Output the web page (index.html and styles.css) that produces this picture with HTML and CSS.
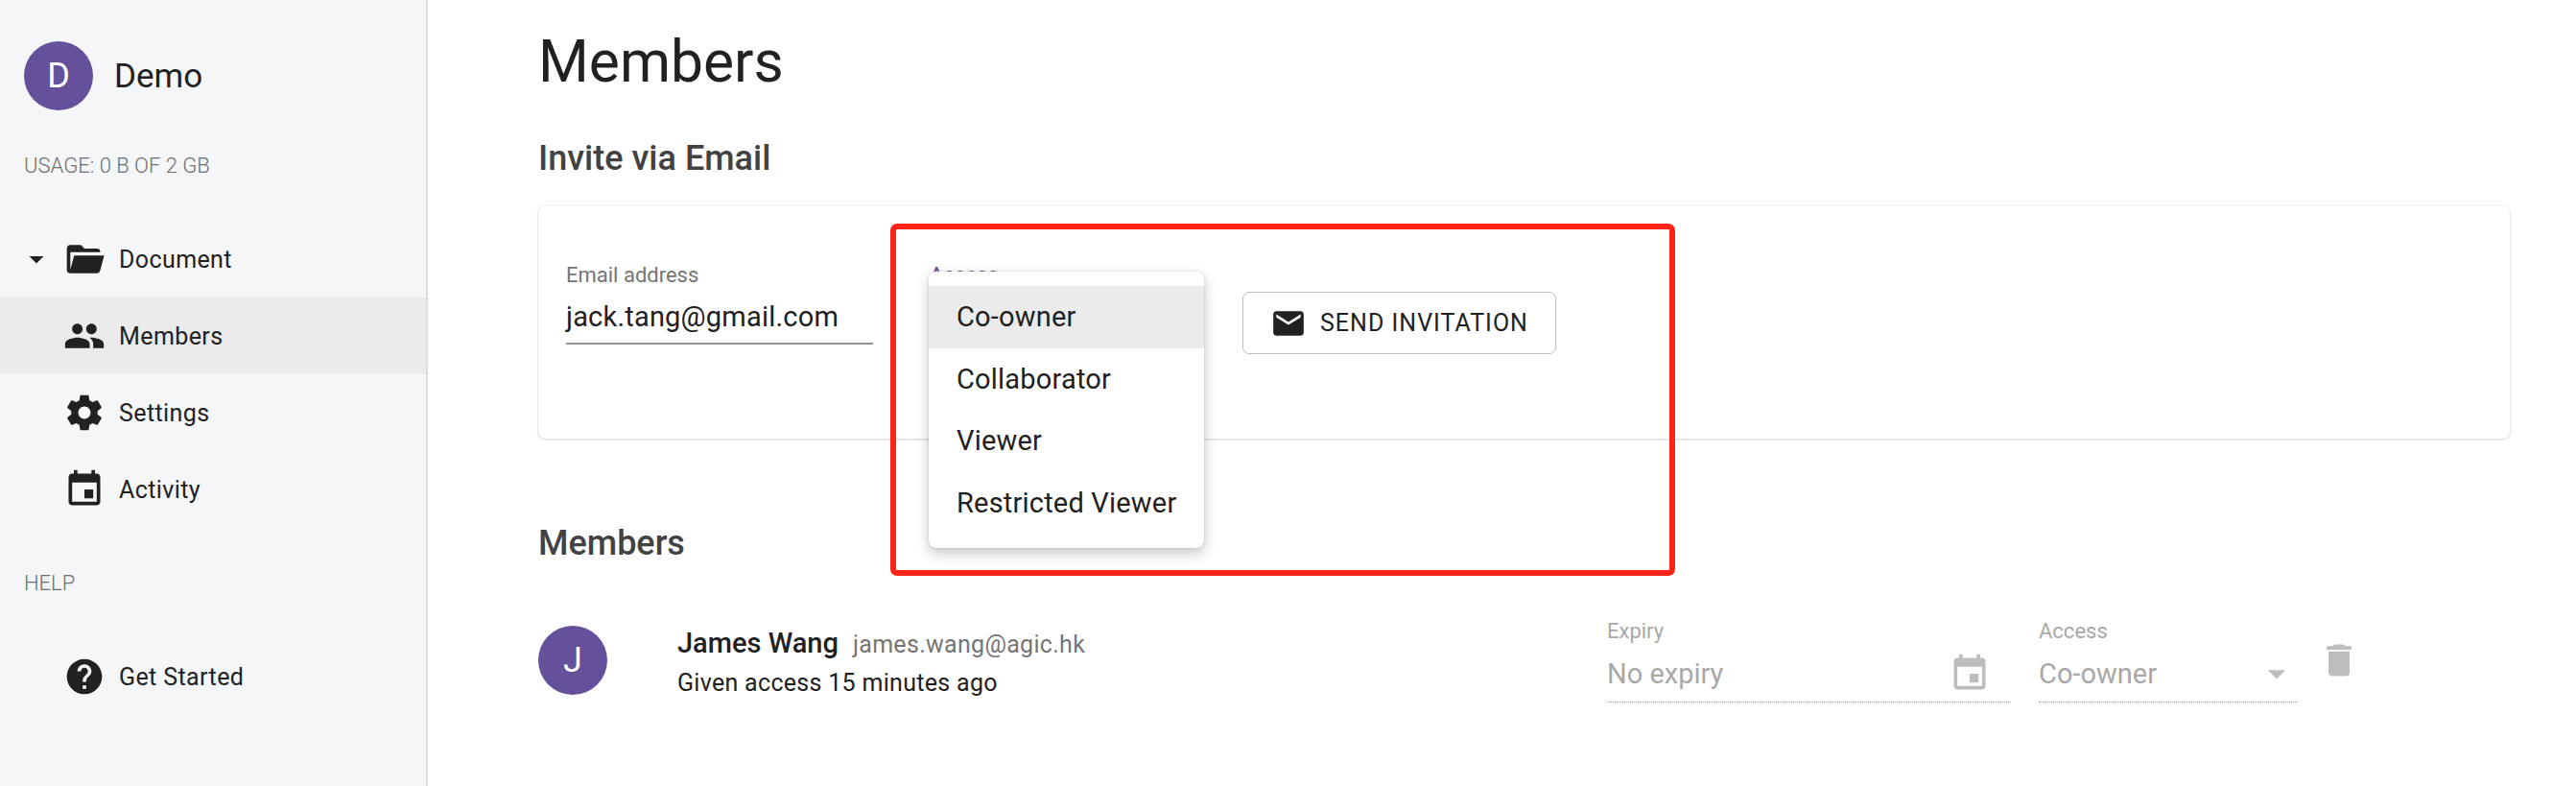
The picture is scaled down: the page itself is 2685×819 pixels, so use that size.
FILE: index.html
```html
<!DOCTYPE html>
<html lang="en">
<head>
  <meta charset="UTF-8" />
  <title>Members</title>
  <link rel="stylesheet" href="styles.css">
</head>
<body>
  <aside class="sidebar">
    <div class="profile">
      <div class="avatar">D</div>
      <span class="profile-name">Demo</span>
    </div>
    <p class="side-note usage">USAGE: 0 B OF 2 GB</p>

    <nav class="nav">
      <a class="nav-item nav-item-parent">
        <svg class="caret" viewBox="0 0 24 24"><path d="M7 10l5 5 5-5z"/></svg>
        <svg class="icon folder" viewBox="0 0 24 24"><path d="M19 20H4a2 2 0 0 1-2-2V6c0-1.11.89-2 2-2h6l2 2h7a2 2 0 0 1 2 2H4v10l2.14-8h17.07l-2.28 8.5c-.23.87-1.01 1.5-1.93 1.5z"/></svg>
        Document
      </a>
      <a class="nav-item active">
        <svg class="icon" viewBox="0 0 24 24"><path d="M16 11c1.66 0 2.99-1.34 2.99-3S17.66 5 16 5c-1.66 0-3 1.34-3 3s1.34 3 3 3zm-8 0c1.66 0 2.99-1.34 2.99-3S9.66 5 8 5C6.34 5 5 6.34 5 8s1.34 3 3 3zm0 2c-2.33 0-7 1.17-7 3.5V19h14v-2.5c0-2.33-4.67-3.5-7-3.5zm8 0c-.29 0-.62.02-.97.05 1.16.84 1.97 1.97 1.97 3.45V19h6v-2.5c0-2.33-4.67-3.5-7-3.5z"/></svg>
        Members
      </a>
      <a class="nav-item">
        <svg class="icon" viewBox="0 0 24 24"><path d="M19.43 12.98c.04-.32.07-.64.07-.98s-.03-.66-.07-.98l2.11-1.65c.19-.15.24-.42.12-.64l-2-3.46c-.12-.22-.39-.3-.61-.22l-2.49 1c-.52-.4-1.08-.73-1.69-.98l-.38-2.65C14.46 2.18 14.25 2 14 2h-4c-.25 0-.46.18-.49.42l-.38 2.65c-.61.25-1.17.59-1.69.98l-2.49-1c-.23-.09-.49 0-.61.22l-2 3.46c-.13.22-.07.49.12.64l2.11 1.65c-.04.32-.07.65-.07.98s.03.66.07.98l-2.11 1.65c-.19.15-.24.42-.12.64l2 3.46c.12.22.39.3.61.22l2.49-1c.52.4 1.08.73 1.69.98l.38 2.65c.03.24.24.42.49.42h4c.25 0 .46-.18.49-.42l.38-2.65c.61-.25 1.17-.59 1.69-.98l2.49 1c.23.09.49 0 .61-.22l2-3.46c.12-.22.07-.49-.12-.64l-2.11-1.65zM12 15.5c-1.93 0-3.5-1.57-3.5-3.5s1.57-3.5 3.5-3.5 3.5 1.57 3.5 3.5-1.57 3.5-3.5 3.5z"/></svg>
        Settings
      </a>
      <a class="nav-item">
        <svg class="icon" viewBox="0 0 24 24"><path d="M17 12h-5v5h5v-5zM16 1v2H8V1H6v2H5c-1.11 0-1.99.9-1.99 2L3 19c0 1.1.89 2 2 2h14c1.1 0 2-.9 2-2V5c0-1.1-.9-2-2-2h-1V1h-2zm3 18H5V8h14v11z"/></svg>
        Activity
      </a>
    </nav>

    <p class="side-note help">HELP</p>

    <nav class="nav nav-help">
      <a class="nav-item">
        <svg class="icon" viewBox="0 0 24 24"><path d="M12 2C6.48 2 2 6.48 2 12s4.48 10 10 10 10-4.48 10-10S17.52 2 12 2zm1 17h-2v-2h2v2zm2.07-7.75l-.9.92C13.45 12.9 13 13.5 13 15h-2v-.5c0-1.1.45-2.1 1.17-2.83l1.24-1.26c.37-.36.59-.86.59-1.41 0-1.1-.9-2-2-2s-2 .9-2 2H8c0-2.21 1.79-4 4-4s4 1.79 4 4c0 .88-.36 1.68-.93 2.25z"/></svg>
        Get Started
      </a>
    </nav>
  </aside>

  <main class="content">
    <h1 class="page-title">Members</h1>

    <h2 class="section-title invite-title">Invite via Email</h2>
    <section class="card">
      <div class="field email-field">
        <label class="field-label">Email address</label>
        <div class="field-value">jack.tang@gmail.com</div>
      </div>
      <div class="field access-field">
        <label class="field-label field-label-focus">Access</label>
      </div>
      <button class="send-button" type="button">
        <svg class="icon" viewBox="0 0 24 24"><path d="M20 4H4c-1.1 0-1.99.9-1.99 2L2 18c0 1.1.9 2 2 2h16c1.1 0 2-.9 2-2V6c0-1.1-.9-2-2-2zm0 4l-8 5-8-5V6l8 5 8-5v2z"/></svg>
        SEND INVITATION
      </button>
    </section>

    <h2 class="section-title members-title">Members</h2>
    <section class="member-row">
      <div class="avatar member-avatar">J</div>
      <div class="member-info">
        <div class="member-head"><span class="member-name">James Wang</span><span class="member-email">james.wang@agic.hk</span></div>
        <div class="member-since">Given access 15 minutes ago</div>
      </div>
      <div class="muted-field expiry-field">
        <label class="field-label">Expiry</label>
        <div class="muted-value">
          No expiry
          <svg class="icon calendar" viewBox="0 0 24 24"><path d="M17 12h-5v5h5v-5zM16 1v2H8V1H6v2H5c-1.11 0-1.99.9-1.99 2L3 19c0 1.1.89 2 2 2h14c1.1 0 2-.9 2-2V5c0-1.1-.9-2-2-2h-1V1h-2zm3 18H5V8h14v11z"/></svg>
        </div>
      </div>
      <div class="muted-field role-field">
        <label class="field-label">Access</label>
        <div class="muted-value">
          Co-owner
          <svg class="icon" viewBox="0 0 24 24"><path d="M7 10l5 5 5-5z"/></svg>
        </div>
      </div>
      <svg class="icon trash" viewBox="0 0 24 24"><path d="M6 19c0 1.1.9 2 2 2h8c1.1 0 2-.9 2-2V7H6v12zM19 4h-3.5l-1-1h-5l-1 1H5v2h14V4z"/></svg>
    </section>
  </main>

  <ul class="menu">
    <li class="menu-item selected">Co-owner</li>
    <li class="menu-item">Collaborator</li>
    <li class="menu-item">Viewer</li>
    <li class="menu-item">Restricted Viewer</li>
  </ul>
  <div class="callout"></div>
</body>
</html>
```

FILE: styles.css
```css
:root {
  --color-text: #212121;
  --color-heading: #424242;
  --color-muted: #757575;
  --color-disabled: #bdbdbd;
  --color-purple: #64509b;
  --color-hover: #ebebeb;
}

* {
  box-sizing: border-box;
}

html,
body {
  height: 100%;
}

body {
  margin: 0;
  display: flex;
  overflow: hidden;
  background: #fff;
  color: var(--color-text);
  font-family: Roboto, "Liberation Sans", sans-serif;
}

.icon {
  width: 44px;
  height: 44px;
  flex: none;
  fill: currentColor;
}

.avatar {
  width: 72px;
  height: 72px;
  flex: none;
  display: flex;
  align-items: center;
  justify-content: center;
  border-radius: 50%;
  background: var(--color-purple);
  color: #fff;
  font-size: 36px;
}

/* sidebar */
.sidebar {
  width: 446px;
  flex: none;
  padding-top: 43px;
  background: #f5f6f8;
  border-right: 2px solid #dcdde0;
}

.profile {
  display: flex;
  align-items: center;
  gap: 22px;
  padding-left: 25px;
}

.profile-name {
  font-size: 35px;
}

.side-note {
  margin: 0;
  padding-left: 25px;
  font-size: 22px;
  font-weight: 300;
  line-height: 26px;
  color: #6e6e6e;
}

.usage {
  margin-top: 45px;
}

.help {
  margin-top: 45px;
}

.nav {
  margin-top: 44px;
}

.nav-help {
  margin-top: 44px;
}

.nav-item {
  height: 80px;
  display: flex;
  align-items: center;
  gap: 14px;
  padding-left: 66px;
  font-size: 25px;
  letter-spacing: 0.4px;
}

.nav-item-parent {
  padding-left: 20px;
  gap: 0;
}

.nav-item-parent .caret {
  width: 36px;
  height: 36px;
  margin-right: 10px;
  fill: currentColor;
}

.nav-item-parent .folder {
  margin-right: 14px;
  fill: var(--color-text);
}

.nav-item.active {
  background: var(--color-hover);
}

/* main column */
.content {
  flex: 1;
  padding: 29px 69px 0 115px;
}

.page-title {
  margin: 0;
  font-size: 60.5px;
  font-weight: 400;
  line-height: 72px;
}

.section-title {
  margin: 0;
  font-size: 36px;
  font-weight: 500;
  line-height: 44px;
  color: var(--color-heading);
}

.invite-title {
  margin-top: 42px;
}

.members-title {
  margin-top: 87px;
}

.card {
  height: 243px;
  margin-top: 27px;
  display: flex;
  align-items: flex-start;
  padding: 60px 0 0 29px;
  border-radius: 8px;
  box-shadow: 0 1px 3px rgba(0, 0, 0, 0.16), 0 0 0 1px rgba(0, 0, 0, 0.03);
}

.field-label {
  display: block;
  font-size: 22px;
  line-height: 26px;
  color: var(--color-muted);
}

.field-label-focus {
  color: var(--color-purple);
}

.email-field {
  width: 320px;
  border-bottom: 2px solid #949494;
}

.field-value {
  margin-top: 10px;
  padding-bottom: 7px;
  font-size: 29px;
  line-height: 40px;
  letter-spacing: 0.2px;
}

.access-field {
  width: 286px;
  margin-left: 59px;
}

.send-button {
  height: 65px;
  margin: 30px 0 0 40px;
  padding: 0 28px 0 28px;
  display: flex;
  align-items: center;
  gap: 14px;
  border: 1px solid #bdbdbd;
  border-radius: 7px;
  background: #fff;
  color: var(--color-text);
  font-family: inherit;
  font-size: 25px;
  font-weight: 400;
  letter-spacing: 1px;
}

.send-button .icon {
  width: 38px;
  height: 38px;
}

/* member list */
.member-row {
  margin-top: 57px;
  display: flex;
  align-items: flex-start;
}

.member-avatar {
  margin-top: 7px;
}

.member-info {
  width: 969px;
  margin: 7px 0 0 73px;
}

.member-head {
  display: flex;
  align-items: baseline;
  gap: 15px;
  line-height: 36px;
}

.member-name {
  font-size: 29px;
  font-weight: 500;
}

.member-email {
  font-size: 25px;
  letter-spacing: 0.3px;
  color: var(--color-muted);
}

.member-since {
  margin-top: 4px;
  font-size: 25px;
  line-height: 36px;
  letter-spacing: 0.3px;
}

.muted-field .field-label {
  color: #a8a8a8;
}

.muted-value {
  height: 50px;
  margin-top: 11px;
  display: flex;
  align-items: flex-start;
  justify-content: space-between;
  border-bottom: 1px dotted #a0a0a0;
  font-size: 29px;
  line-height: 40px;
  color: #a8a8a8;
}

.muted-value .icon {
  margin-top: -2px;
  color: var(--color-disabled);
}

.expiry-field {
  width: 421px;
}

.muted-value .calendar {
  margin-right: 21px;
}

.role-field {
  width: 270px;
  margin-left: 29px;
}

.trash {
  margin: 21px 0 0 21px;
  color: var(--color-disabled);
}

/* open dropdown and the red mark drawn over the screenshot */
.menu {
  position: absolute;
  left: 968px;
  top: 283px;
  width: 287px;
  height: 288px;
  margin: 0;
  padding: 15px 0 0;
  list-style: none;
  border-radius: 8px;
  background: #fff;
  box-shadow: 0 6px 14px rgba(0, 0, 0, 0.22), 0 0 3px rgba(0, 0, 0, 0.14);
}

.menu-item {
  height: 64.5px;
  display: flex;
  align-items: center;
  padding-left: 29px;
  font-size: 29px;
  letter-spacing: 0.2px;
}

.menu-item.selected {
  background: var(--color-hover);
}

.callout {
  position: absolute;
  left: 928px;
  top: 233px;
  width: 818px;
  height: 367px;
  border: 6px solid #ff2415;
  border-radius: 7px;
}
```
